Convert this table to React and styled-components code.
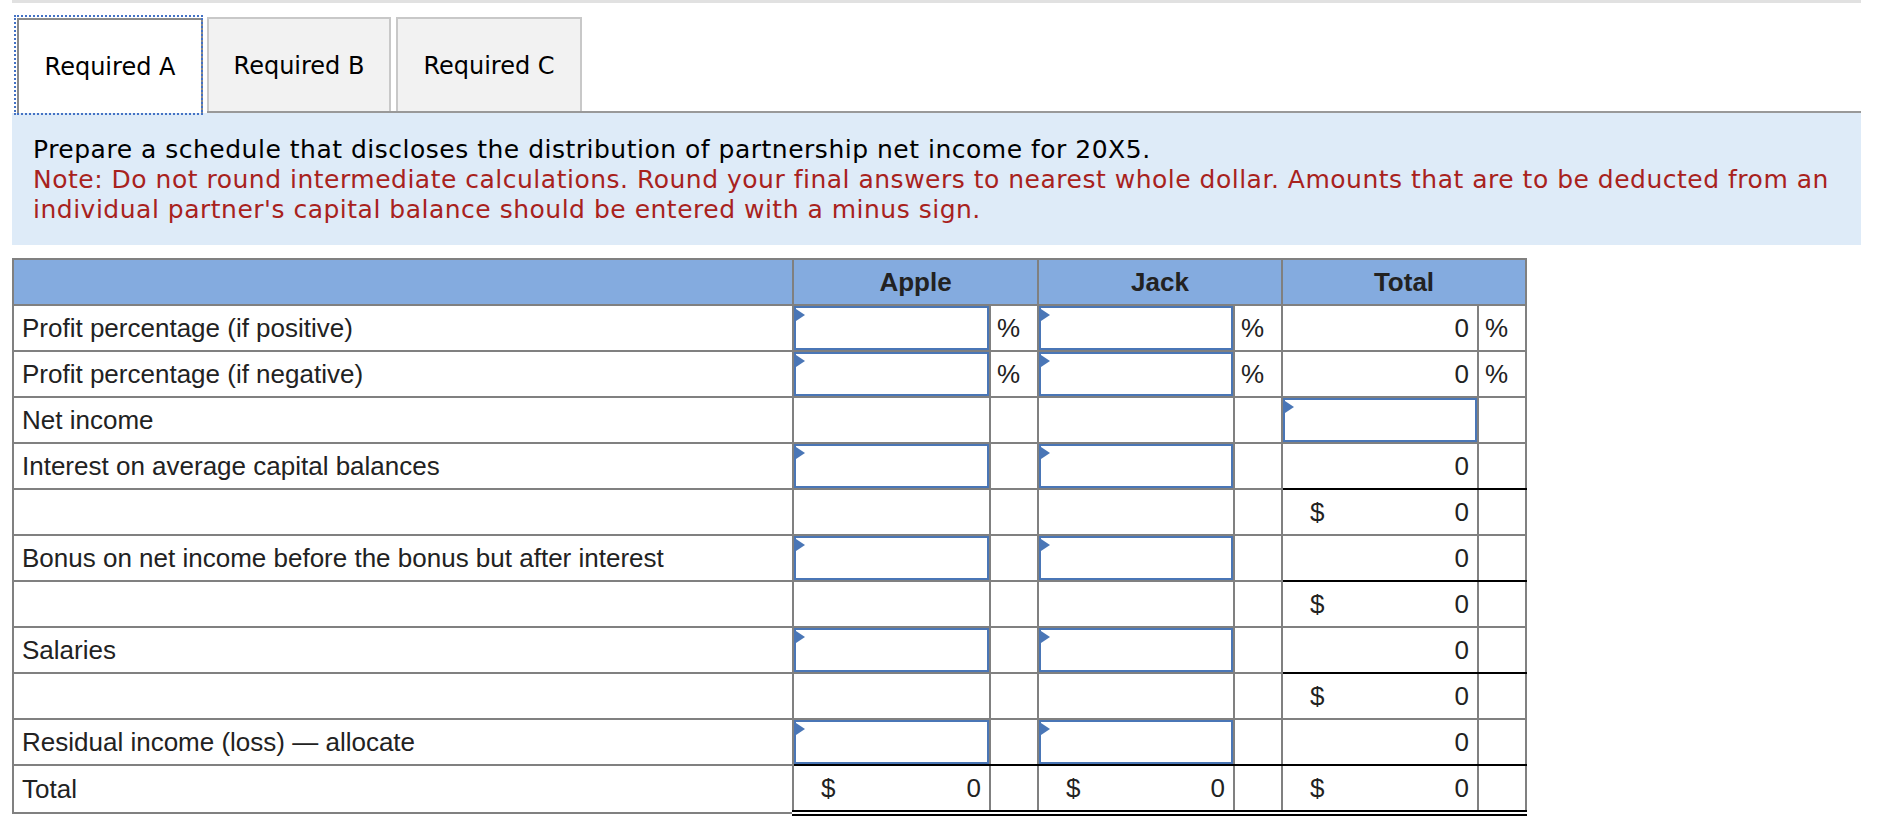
import styled, { createGlobalStyle } from "styled-components";

const GlobalStyle = createGlobalStyle`
  body {
    margin: 0;
    background: #fff;
  }
`;

const Page = styled.div`
  width: 1849px;
  margin-left: 12px;
  font-family: "DejaVu Sans", Verdana, sans-serif;
`;

const TopRule = styled.div`
  height: 3px;
  background: #e1e1e1;
`;

const TabBar = styled.div`
  display: flex;
  align-items: flex-end;
  height: 110px;
  padding-left: 5px;
  gap: 4px;
`;

const Tab = styled.div`
  position: relative;
  box-sizing: border-box;
  width: ${({ $w }) => $w}px;
  display: flex;
  align-items: center;
  justify-content: center;
  padding-top: ${({ $active }) => ($active ? 0 : 2)}px;
  font-size: 24px;
  color: #000;
  border: 2px solid ${({ $active }) => ($active ? "#8a8a8a" : "#c8c8c8")};
  border-bottom: none;
  background: ${({ $active }) => ($active ? "#fff" : "#f2f2f2")};
  height: ${({ $active }) => ($active ? 95 : 94)}px;
  z-index: ${({ $active }) => ($active ? 2 : 1)};

  ${({ $active }) =>
    $active &&
    `
    &::after {
      content: "";
      position: absolute;
      left: -5px;
      top: -5px;
      right: -2px;
      bottom: -2px;
      border: 2px dotted #4472c4;
    }
  `}
`;

const TabRest = styled.div`
  flex: 1;
  display: flex;
  align-items: flex-end;
  gap: 5px;
  border-bottom: 2px solid #999;
`;

const Prompt = styled.div`
  background: #deebf8;
  padding: 22px 4px 20px 21px;
  font-size: 25px;
  letter-spacing: 0.5px;
  line-height: 30px;
  color: #000;
`;

const Note = styled.div`
  color: #a8221d;
`;

const Table = styled.table`
  margin-top: 13px;
  border-collapse: collapse;
  table-layout: fixed;
  width: 1513px;
  font-family: "Liberation Sans", Arial, sans-serif;
  font-size: 26px;
  color: #222;
`;

const Head = styled.th`
  background: #84abdf;
  border: 2px solid #808080;
  height: 44px;
  padding: 0;
  font-weight: bold;
  text-align: center;
`;

const Cell = styled.td`
  border: 2px solid #808080;
  height: 44px;
  padding: ${({ $pad }) => $pad || "0 8px"};
  text-align: ${({ $align }) => $align || "left"};
  white-space: nowrap;
  ${({ $line }) => $line === "single" && "border-bottom: 2px solid #000;"}
  ${({ $line }) => $line === "double" && "border-bottom: 6px double #000;"}
`;

const InputBox = styled.div`
  position: relative;
  box-sizing: border-box;
  height: 44px;
  border: 2px solid #4a76b6;
  background: #fff;

  &::before {
    content: "";
    position: absolute;
    left: 0;
    top: 1px;
    border-left: 9px solid #4a76b6;
    border-top: 6px solid transparent;
    border-bottom: 6px solid transparent;
  }

  input {
    width: 100%;
    height: 100%;
    border: none;
    outline: none;
    background: transparent;
    box-sizing: border-box;
    font: inherit;
    text-align: right;
    padding: 0 8px;
  }
`;

const Amount = styled.div`
  display: flex;
  justify-content: space-between;
  padding-left: ${({ $dollar }) => ($dollar ? 19 : 0)}px;
`;

const Entry = ({ line }) => (
  <Cell $pad="0" $line={line}>
    <InputBox>
      <input type="text" />
    </InputBox>
  </Cell>
);

const Value = ({ dollar, line, children }) => (
  <Cell $line={line}>
    <Amount $dollar={dollar}>
      <span>{dollar ? "$" : ""}</span>
      <span>{children}</span>
    </Amount>
  </Cell>
);

const Pct = ({ show, line }) => (
  <Cell $pad="0 6px" $line={line}>
    {show ? "%" : ""}
  </Cell>
);

const rows = [
  { label: "Profit percentage (if positive)", kind: "pct" },
  { label: "Profit percentage (if negative)", kind: "pct" },
  { label: "Net income", kind: "net" },
  { label: "Interest on average capital balances", kind: "alloc" },
  { label: "", kind: "sub" },
  { label: "Bonus on net income before the bonus but after interest", kind: "alloc" },
  { label: "", kind: "sub" },
  { label: "Salaries", kind: "alloc" },
  { label: "", kind: "sub" },
  { label: "Residual income (loss) \u2014 allocate", kind: "last" },
  { label: "Total", kind: "total" },
];

const Row = ({ label, kind }) => {
  if (kind === "pct") {
    return (
      <tr>
        <Cell>{label}</Cell>
        <Entry />
        <Pct show />
        <Entry />
        <Pct show />
        <Value>0</Value>
        <Pct show />
      </tr>
    );
  }
  if (kind === "net") {
    return (
      <tr>
        <Cell>{label}</Cell>
        <Cell />
        <Cell />
        <Cell />
        <Cell />
        <Entry />
        <Cell />
      </tr>
    );
  }
  if (kind === "alloc" || kind === "last") {
    const all = kind === "last" ? "single" : undefined;
    return (
      <tr>
        <Cell>{label}</Cell>
        <Entry line={all} />
        <Cell $line={all} />
        <Entry line={all} />
        <Cell $line={all} />
        <Value line="single">0</Value>
        <Cell $line="single" />
      </tr>
    );
  }
  if (kind === "sub") {
    return (
      <tr>
        <Cell />
        <Cell />
        <Cell />
        <Cell />
        <Cell />
        <Value dollar>0</Value>
        <Cell />
      </tr>
    );
  }
  return (
    <tr>
      <Cell>{label}</Cell>
      <Value dollar line="double">0</Value>
      <Cell $line="double" />
      <Value dollar line="double">0</Value>
      <Cell $line="double" />
      <Value dollar line="double">0</Value>
      <Cell $line="double" />
    </tr>
  );
};

export default function App() {
  return (
    <Page>
      <GlobalStyle />
      <TopRule />
      <TabBar>
        <Tab $active $w={186}>Required A</Tab>
        <TabRest>
          <Tab $w={184}>Required B</Tab>
          <Tab $w={186}>Required C</Tab>
        </TabRest>
      </TabBar>
      <Prompt>
        <div>Prepare a schedule that discloses the distribution of partnership net income for 20X5.</div>
        <Note>
          Note: Do not round intermediate calculations. Round your final answers to nearest whole dollar.
          Amounts that are to be deducted from an individual partner's capital balance should be entered
          with a minus sign.
        </Note>
      </Prompt>
      <Table>
        <colgroup>
          <col style={{ width: 780 }} />
          <col style={{ width: 197 }} />
          <col style={{ width: 48 }} />
          <col style={{ width: 196 }} />
          <col style={{ width: 48 }} />
          <col style={{ width: 196 }} />
          <col style={{ width: 48 }} />
        </colgroup>
        <thead>
          <tr>
            <Head />
            <Head colSpan={2}>Apple</Head>
            <Head colSpan={2}>Jack</Head>
            <Head colSpan={2}>Total</Head>
          </tr>
        </thead>
        <tbody>
          {rows.map((r, i) => (
            <Row key={i} {...r} />
          ))}
        </tbody>
      </Table>
    </Page>
  );
}
